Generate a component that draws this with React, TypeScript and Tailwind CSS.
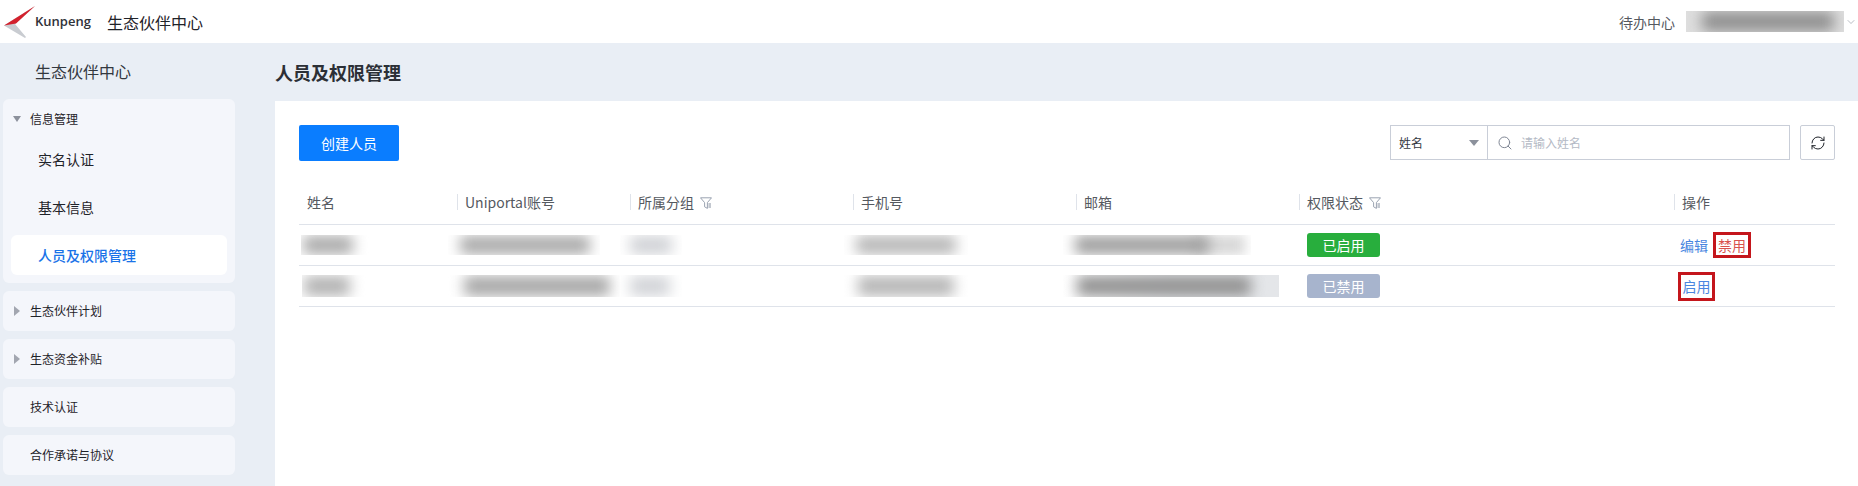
import { ChevronDown, Search, RefreshCw } from 'lucide-react';

const FONT = "font-['Noto_Sans_CJK_SC','Noto_Sans',sans-serif]";

function KunpengLogo() {
  return (
    <svg width="32" height="32" viewBox="0 0 32 32" className="shrink-0">
      <path d="M31 0 L11 18 L22 31 L21 32 L0 19.5 Z" fill="#c9ccd1" />
      <path d="M31 0 L0 19.5 L12 17.5 Z" fill="#d3212d" />
    </svg>
  );
}

function FilterIcon() {
  return (
    <svg width="12" height="12" viewBox="0 0 12 12" className="ml-1.5 mt-0.5 shrink-0" fill="none">
      <path d="M0.5 0.8 H11.5 L7.4 5.6 V11.4 L4.6 9.8 V5.6 Z" stroke="#8f98a8" strokeWidth="0.9" />
      <rect x="8.4" y="6" width="2.6" height="5" fill="#c3c8d0" />
    </svg>
  );
}

function Caret({ open }: { open?: boolean }) {
  return open ? (
    <span className="mr-[9px] h-0 w-0 border-x-[4.5px] border-t-[6px] border-x-transparent border-t-[#8c919c]" />
  ) : (
    <span className="ml-[1px] mr-[10px] h-0 w-0 border-y-[5px] border-l-[6px] border-y-transparent border-l-[#a2a6b0]" />
  );
}

function SideCard({ label, caret }: { label: string; caret?: boolean }) {
  return (
    <div className="flex h-10 items-center rounded-md bg-[#f4f6fb] pl-[10px] text-xs text-[#1f2329]">
      {caret ? <Caret /> : <span className="w-[17px]" />}
      {label}
    </div>
  );
}

function Sidebar() {
  return (
    <aside className="w-[275px] shrink-0 pl-[3px] pr-[40px]">
      <div className="flex h-[56px] items-center pl-[32px] text-base text-[#33383f]">生态伙伴中心</div>
      <div className="flex flex-col gap-2">
        <div className="flex flex-col rounded-md bg-[#f4f6fb] px-2 pb-2">
          <div className="flex h-10 items-center pl-[2px] text-xs text-[#1f2329]">
            <Caret open />
            信息管理
          </div>
          <div className="flex h-10 items-center pl-[27px] text-sm text-[#1f2329]">实名认证</div>
          <div className="mt-2 flex h-10 items-center pl-[27px] text-sm text-[#1f2329]">基本信息</div>
          <div className="mt-2 flex h-10 items-center rounded-md bg-white pl-[27px] text-sm font-medium text-[#1a73e8]">
            人员及权限管理
          </div>
        </div>
        <SideCard label="生态伙伴计划" caret />
        <SideCard label="生态资金补贴" caret />
        <SideCard label="技术认证" />
        <SideCard label="合作承诺与协议" />
      </div>
    </aside>
  );
}

// blurred out personal data in the screenshot
function Blurred({ box, blob, tail }: { box: string; blob: string; tail?: string }) {
  return (
    <div className={`relative overflow-hidden ${box}`}>
      {tail && <div className={`absolute inset-y-0 blur-[6px] ${tail}`} />}
      <div className={`absolute inset-y-[1px] rounded-sm blur-[7px] ${blob}`} />
    </div>
  );
}

const GRID = 'grid grid-cols-[158px_173px_223px_223px_223px_375px_1fr] items-center';

function HeadCell({ label, filter, first }: { label: string; filter?: boolean; first?: boolean }) {
  return (
    <div className="flex h-4 items-center">
      {!first && <span className="mr-[7px] h-4 w-px bg-[#dfe3ea]" />}
      <span className={first ? 'pl-2' : ''}>{label}</span>
      {filter && <FilterIcon />}
    </div>
  );
}

function Table() {
  return (
    <div className="mt-[22px] text-sm text-[#55595f]">
      <div className={`${GRID} h-[42px] border-b border-[#dfe3ea] pb-[3px]`}>
        <HeadCell label="姓名" first />
        <HeadCell label="Uniportal账号" />
        <HeadCell label="所属分组" filter />
        <HeadCell label="手机号" />
        <HeadCell label="邮箱" />
        <HeadCell label="权限状态" filter />
        <HeadCell label="操作" />
      </div>

      <div className={`${GRID} h-[41px] border-b border-[#dfe3ea]`}>
        <Blurred box="ml-[2px] h-5 w-[68px]" blob="left-[2px] w-[50px] bg-[#a9a9a9]" />
        <Blurred box="-ml-[9px] h-5 w-[152px]" blob="left-[12px] w-[130px] bg-[#a8a8a8]" />
        <Blurred box="-ml-[10px] h-5 w-[62px]" blob="left-[10px] w-[42px] bg-[#cfd1d5]" />
        <Blurred box="-ml-[9px] h-5 w-[124px]" blob="left-[12px] w-[100px] bg-[#b6b6b6]" />
        <Blurred box="-ml-[13px] h-5 w-[188px]" blob="left-[12px] w-[134px] bg-[#9c9c9c]" tail="left-[130px] w-[52px] bg-[#d8d8d8]" />
        <div className="ml-2 flex h-6 w-[73px] items-center justify-center rounded-[3px] bg-[#28ae3d] text-white">已启用</div>
        <div className="flex items-center">
          <a className="ml-[6px] text-[#4a86e0]">编辑</a>
          <a className="ml-[5px] flex h-[26px] w-[38px] items-center justify-center border-[3px] border-[#c4161c] text-[#d9534f]">禁用</a>
        </div>
      </div>

      <div className={`${GRID} h-[41px] border-b border-[#dfe3ea]`}>
        <Blurred box="ml-[3px] h-[22px] w-[65px]" blob="left-[2px] w-[46px] bg-[#b3b3b3]" />
        <Blurred box="-ml-[9px] h-[22px] w-[172px]" blob="left-[16px] w-[146px] bg-[#a8a8a8]" />
        <Blurred box="-ml-[10px] h-[22px] w-[62px]" blob="left-[10px] w-[40px] bg-[#d2d4d8]" />
        <Blurred box="-ml-[9px] h-[22px] w-[124px]" blob="left-[14px] w-[96px] bg-[#b6b6b6]" />
        <Blurred box="-ml-[13px] h-[22px] w-[216px] bg-gradient-to-r from-white via-[#e4e6e9] to-[#e4e6e9]" blob="left-[14px] w-[174px] bg-[#929292]" />
        <div className="ml-2 flex h-6 w-[73px] items-center justify-center rounded-[3px] bg-[#a7b4cd] text-white">已禁用</div>
        <div className="flex items-center">
          <a className="ml-[4px] flex h-[29px] w-[37px] items-center justify-center border-[3px] border-[#c4161c] text-[#4a86e0]">启用</a>
        </div>
      </div>
    </div>
  );
}

export default function App() {
  return (
    <div className={`h-[486px] w-[1858px] overflow-hidden bg-[#e9eef5] ${FONT}`}>
      <header className="flex h-[43px] items-center justify-between bg-white pl-1 pr-[1px]">
        <div className="flex items-center">
          <KunpengLogo />
          <span className="ml-[-1px] w-[55px] font-['Open_Sans',sans-serif] text-[13px] font-semibold text-[#2f3238]">Kunpeng</span>
          <span className="ml-[17px] text-base text-[#1f2329]">生态伙伴中心</span>
        </div>
        <div className="flex items-center">
          <span className="text-sm text-[#55595f]">待办中心</span>
          <Blurred box="ml-[11px] h-[21px] w-[158px] bg-[#dedede]" blob="left-[16px] w-[132px] bg-[#8e8e8e]" />
          <ChevronDown className="ml-[1px] size-[12px] text-[#8a909c]" strokeWidth={1.2} />
        </div>
      </header>

      <div className="flex">
        <Sidebar />
        <main className="min-w-0 flex-1">
          <h1 className="flex h-[58px] items-center text-lg font-bold text-[#2b2f36]">人员及权限管理</h1>
          <div className="h-[385px] bg-white py-6 pl-6 pr-[23px]">
            <div className="flex items-start justify-between">
              <button className="h-9 w-[100px] rounded-[2px] bg-[#0a7dff] text-sm text-white">创建人员</button>
              <div className="flex items-center">
                <div className="flex h-[35px] w-[98px] items-center justify-between border border-[#c9ced8] pl-2 pr-2 text-xs text-[#33383f]">
                  姓名
                  <span className="h-0 w-0 border-x-[5px] border-t-[6px] border-x-transparent border-t-[#8c919c]" />
                </div>
                <div className="flex h-[35px] w-[302px] items-center border border-l-0 border-[#c9ced8] pl-[9px] text-xs text-[#b4bac5]">
                  <Search className="mr-2 size-4 text-[#7f8694]" strokeWidth={1.5} />
                  请输入姓名
                </div>
                <div className="ml-[10px] flex h-[35px] w-[35px] items-center justify-center rounded-[2px] border border-[#c9ced8]">
                  <RefreshCw className="size-4 text-[#20242b]" strokeWidth={1.5} />
                </div>
              </div>
            </div>
            <Table />
          </div>
        </main>
      </div>
    </div>
  );
}
